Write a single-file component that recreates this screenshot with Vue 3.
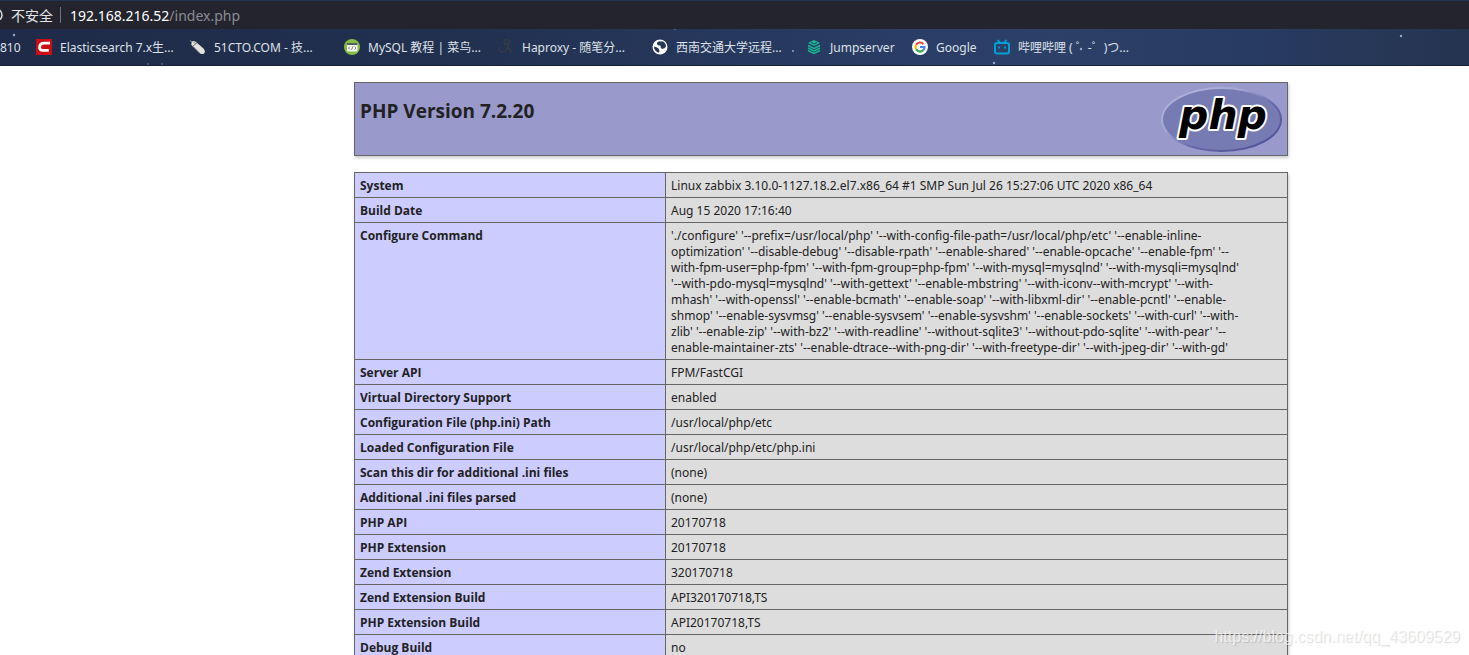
<script setup>
const url = { host: '192.168.216.52', path: '/index.php' }

const bookmarks = [
  { icon: 'csdn', label: 'Elasticsearch 7.x生...' },
  { icon: 'mouse', label: '51CTO.COM - 技...' },
  { icon: 'runoob', label: 'MySQL 教程 | 菜鸟...' },
  { icon: 'cnblogs', label: 'Haproxy - 随笔分...' },
  { icon: 'globe', label: '西南交通大学远程...' },
  { icon: 'jump', label: 'Jumpserver' },
  { icon: 'google', label: 'Google' },
  { icon: 'bili', label: '哔哩哔哩 ( ゜-゜)つ...' },
]

const configure = [
  "'./configure' '--prefix=/usr/local/php' '--with-config-file-path=/usr/local/php/etc' '--enable-inline-",
  "optimization' '--disable-debug' '--disable-rpath' '--enable-shared' '--enable-opcache' '--enable-fpm' '--",
  "with-fpm-user=php-fpm' '--with-fpm-group=php-fpm' '--with-mysql=mysqlnd' '--with-mysqli=mysqlnd'",
  "'--with-pdo-mysql=mysqlnd' '--with-gettext' '--enable-mbstring' '--with-iconv--with-mcrypt' '--with-",
  "mhash' '--with-openssl' '--enable-bcmath' '--enable-soap' '--with-libxml-dir' '--enable-pcntl' '--enable-",
  "shmop' '--enable-sysvmsg' '--enable-sysvsem' '--enable-sysvshm' '--enable-sockets' '--with-curl' '--with-",
  "zlib' '--enable-zip' '--with-bz2' '--with-readline' '--without-sqlite3' '--without-pdo-sqlite' '--with-pear' '--",
  "enable-maintainer-zts' '--enable-dtrace--with-png-dir' '--with-freetype-dir' '--with-jpeg-dir' '--with-gd'",
].join('\n')

const rows = [
  ['System', 'Linux zabbix 3.10.0-1127.18.2.el7.x86_64 #1 SMP Sun Jul 26 15:27:06 UTC 2020 x86_64'],
  ['Build Date', 'Aug 15 2020 17:16:40'],
  ['Configure Command', configure],
  ['Server API', 'FPM/FastCGI'],
  ['Virtual Directory Support', 'enabled'],
  ['Configuration File (php.ini) Path', '/usr/local/php/etc'],
  ['Loaded Configuration File', '/usr/local/php/etc/php.ini'],
  ['Scan this dir for additional .ini files', '(none)'],
  ['Additional .ini files parsed', '(none)'],
  ['PHP API', '20170718'],
  ['PHP Extension', '20170718'],
  ['Zend Extension', '320170718'],
  ['Zend Extension Build', 'API320170718,TS'],
  ['PHP Extension Build', 'API20170718,TS'],
  ['Debug Build', 'no'],
]
</script>

<template>
  <div class="window">
    <header class="chrome">
      <div class="address">
        <svg class="info" width="5" height="16" viewBox="0 0 5 16" aria-hidden="true">
          <circle cx="-4" cy="8" r="6" fill="none" stroke="#dcdde0" stroke-width="1.5" />
        </svg>
        <span class="security">不安全</span>
        <span class="divider"></span>
        <span class="url"><span class="host">{{ url.host }}</span>{{ url.path }}</span>
      </div>
      <nav class="bookmarks" aria-label="Bookmarks">
        <svg class="stars" aria-hidden="true">
          <g fill="#93a8d6">
            <circle cx="14" cy="6" r="1.2" /><circle cx="793" cy="22" r="1" />
            <circle cx="994" cy="34" r="1.2" /><circle cx="1401" cy="7" r="1.2" />
            <circle cx="148" cy="35" r="1" opacity=".4" /><circle cx="162" cy="35" r="1" opacity=".4" />
            <circle cx="675" cy="0" r="1" opacity=".5" /><circle cx="1081" cy="20" r="1.2" />
          </g>
        </svg>
        <a class="tail" href="#">810</a>
        <a v-for="b in bookmarks" :key="b.icon" class="bookmark" :class="b.icon" href="#">
          <svg width="16" height="16" viewBox="0 0 16 16" aria-hidden="true">
            <template v-if="b.icon === 'csdn'">
              <rect width="16" height="16" fill="#ca0c16" />
              <path d="M14 4.2 H8 Q4 4.200 3.600 7.800 Q3.200 11.300 7 11.300 H12.800" fill="none" stroke="#fff" stroke-width="2.800" />
            </template>
            <template v-else-if="b.icon === 'mouse'">
              <path d="M1.500 3.500 Q3 .8 6 3 L13.500 9.500 Q16 12.500 14 14.500 Q11.500 16 9 13.500 L3 7.500 Q.5 5.500 1.500 3.500Z" fill="#e4e2dc" />
              <path d="M3 7 L7 3.800 M5.500 4.800 L3.500 2.800 M9 13.500 L3 7.500" stroke="#77736c" fill="none" />
              <path d="M0 1.500 L2 3" stroke="#999" />
            </template>
            <template v-else-if="b.icon === 'runoob'">
              <circle cx="8" cy="8" r="8" fill="#83bd45" />
              <rect x="3" y="4" width="10.500" height="8.500" rx="1" fill="#f4f5ef" />
              <rect x="3" y="4" width="10.500" height="2" fill="#53615d" />
              <path d="M6 7.500 L4.500 9 L6 10.500 M10.500 7.500 L12 9 L10.500 10.500 M9 7.300 L7.500 10.800" stroke="#53615d" stroke-width=".7" fill="none" />
            </template>
            <template v-else-if="b.icon === 'cnblogs'">
              <path d="M1 8 C1 14 5 14 9 11 M6 2 C7 0 12 0 11.500 3.500 C11 6.500 6 6 6 3 M11.500 3.500 Q11 7 9 9 Q12 9 13 14" fill="none" stroke="#3c3b43" stroke-width="1.300" />
            </template>
            <template v-else-if="b.icon === 'globe'">
              <circle cx="8" cy="8" r="7.500" fill="#fff" />
              <path d="M8.500 2 Q4.500 2.500 5 5 Q5.500 6.500 8 6.500 Q9.500 7.500 8.500 8.500 L10 10 Q13 9.500 14 7.500 Q14 3 9.500 2 L9 4Z M2 7.500 Q5 8 6.500 9.500 Q8 11.500 6.800 13.800 Q2 12 2 7.500Z" fill="#263656" />
            </template>
            <template v-else-if="b.icon === 'jump'">
              <path d="M8 1 L14 4 L8 7 L2 4Z" fill="#18b794" />
              <path d="M5 3.500 L8 5 L11 3.500" stroke="#234c62" fill="none" />
              <path d="M2 6.500 L8 9.500 L14 6.500 M2 9 L8 12 L14 9 M2 11.500 L8 14.500 L14 11.500" fill="none" stroke="#18b794" stroke-width="1.400" />
            </template>
            <template v-else-if="b.icon === 'google'">
              <circle cx="8" cy="8" r="8" fill="#fff" />
              <g fill="none" stroke-width="2.200">
                <path d="M11.300 4.900 A4.500 4.500 0 0 0 4.100 5.800" stroke="#ea4335" />
                <path d="M4.100 5.800 A4.500 4.500 0 0 0 4.100 10.200" stroke="#fbbc05" />
                <path d="M4.100 10.200 A4.500 4.500 0 0 0 11 11.400" stroke="#34a853" />
                <path d="M11 11.400 A4.500 4.500 0 0 0 12.500 8 H8" stroke="#4285f4" />
              </g>
            </template>
            <template v-else>
              <rect x="1" y="4" width="14" height="10.500" rx="2" fill="none" stroke="#00a1d6" stroke-width="2" />
              <path d="M3.500 .8 L6 3.500 M12.500 .8 L10 3.500 M5 7.500 V9.500 M11 7.500 V9.500" stroke="#00a1d6" stroke-width="1.800" />
            </template>
          </svg>
          <span>{{ b.label }}</span>
        </a>
      </nav>
    </header>

    <main class="page">
      <div class="center">
        <section class="banner">
          <h1>PHP Version 7.2.20</h1>
          <a href="#" aria-label="PHP logo">
            <svg width="121" height="65" viewBox="0 0 121 65">
              <defs>
                <linearGradient id="rim" x1="0" y1="0" x2="1" y2="1">
                  <stop offset="0" stop-color="#b5b8dc" />
                  <stop offset=".35" stop-color="#a5a8d3" />
                  <stop offset=".6" stop-color="#6366a6" />
                  <stop offset="1" stop-color="#484892" />
                </linearGradient>
              </defs>
              <ellipse cx="60.500" cy="32.500" rx="60.500" ry="32.500" fill="url(#rim)" />
              <ellipse cx="60.500" cy="32.500" rx="58.500" ry="30.500" fill="#777bb3" />
              <text x="62" y="42" text-anchor="middle" class="logo-text">php</text>
            </svg>
          </a>
        </section>

        <table>
          <tbody>
            <tr v-for="row in rows" :key="row[0]">
              <th scope="row">{{ row[0] }}</th>
              <td>{{ row[1] }}</td>
            </tr>
          </tbody>
        </table>
      </div>
    </main>
    <div class="watermark">https://blog.csdn.net/qq_43609529</div>
  </div>
</template>

<style>
body {
  margin: 0;
}
</style>

<style scoped>
.window {
  position: relative;
  height: 100vh;
  overflow: hidden;
  background: #fff;
  color: #222;
  font-family: "Open Sans", "Noto Sans CJK SC", sans-serif;
}
.chrome {
  border-top: 1px solid #223252;
  background: #24242f;
}
.address {
  display: flex;
  align-items: center;
  height: 28px;
  color: #e4e5e8;
  font-size: 14px;
}
.info {
  margin-right: 6px;
}
.divider {
  width: 1px;
  height: 16px;
  margin: 0 9px 0 7px;
  background: #70717a;
}
.url {
  color: #8b8c93;
  font-family: "Noto Sans", sans-serif;
}
.host {
  color: #fff;
}
.bookmarks {
  position: relative;
  display: flex;
  align-items: center;
  height: 36px;
  border-bottom: 1px solid #1b2135;
  background: linear-gradient(90deg, #1f2b48 0, #21304f 30%, #2a3d66 62%, #2c4068 72%, #283b62 85%, #25344f 100%);
  color: #dee1e8;
  font-family: "Noto Sans", "Noto Sans CJK SC", sans-serif;
  font-size: 12px;
  white-space: pre;
}
.stars {
  position: absolute;
  inset: 0;
  width: 100%;
  height: 100%;
}
.tail,
.bookmark {
  position: relative;
  color: inherit;
  text-decoration: none;
}
.tail {
  width: 36px;
}
.bookmark {
  display: flex;
  align-items: center;
  gap: 8px;
  width: 154px;
}
.bookmark.jump {
  width: 106px;
}
.bookmark.google {
  width: 82px;
}
.page {
  padding: 16px 8px 0 181px;
  font-size: 12px;
}
.center {
  width: 934px;
  max-width: 100%;
  margin: 0 auto;
}
.banner {
  display: flex;
  justify-content: space-between;
  align-items: flex-start;
  box-sizing: border-box;
  height: 74px;
  margin-bottom: 16px;
  padding: 4px 5px;
  border: 1px solid #666;
  background: #99c;
  box-shadow: 1px 2px 3px #ccc;
}
h1 {
  margin: 12px 0 0;
  font-size: 19px;
  line-height: 24px;
  font-weight: 700;
}
.logo-text {
  font: italic 700 41px "DejaVu Sans", sans-serif;
  fill: #000;
  stroke: #fff;
  stroke-width: 4px;
  stroke-linejoin: round;
  paint-order: stroke;
}
table {
  width: 100%;
  border-collapse: collapse;
  box-shadow: 1px 2px 3px #ccc;
}
th,
td {
  padding: 5px 5px 3px;
  border: 1px solid #666;
  line-height: 16px;
  text-align: left;
  vertical-align: top;
}
th {
  width: 300px;
  background: #ccf;
  font-weight: 700;
}
td {
  background: #ddd;
  font-family: "Noto Sans", sans-serif;
  white-space: pre-line;
}
.watermark {
  position: absolute;
  right: 9px;
  bottom: 8px;
  color: rgba(255, 255, 255, 0.7);
  font: 16px/20px "Liberation Sans", sans-serif;
  text-shadow: 1px 1px 1px rgba(0, 0, 0, 0.15);
}
</style>
